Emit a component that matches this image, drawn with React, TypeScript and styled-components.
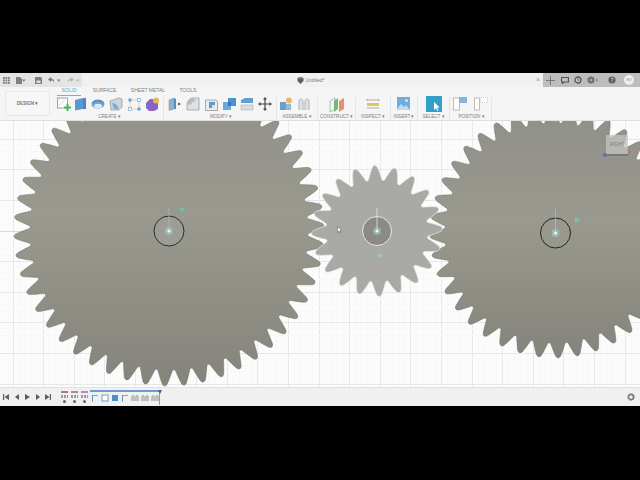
import React from 'react';
import styled, { createGlobalStyle } from 'styled-components';

const Global = createGlobalStyle`
  html, body { margin: 0; background: #000; }
  body { font-family: "Liberation Sans", Arial, sans-serif; }
`;

const Screen = styled.div`
  width: 640px;
  height: 480px;
  display: flex;
  flex-direction: column;
  background: #000;
  overflow: hidden;
`;
const Letterbox = styled.div<{ $h: number }>`
  height: ${p => p.$h}px;
  flex: none;
  background: #000;
`;

/* application bar */
const AppBar = styled.div`
  height: 14px;
  flex: none;
  display: flex;
  align-items: stretch;
  background: #f1f1f1;
`;
const QuickAccess = styled.div`
  width: 82px;
  display: flex;
  align-items: center;
  padding-left: 2px;
  box-sizing: border-box;
  background: #e2e2e2;
  opacity: 0.85;
`;
const BarSlot = styled.span<{ $w: number }>`
  width: ${p => p.$w}px;
  height: 14px;
  flex: none;
  display: flex;
  align-items: center;
  justify-content: center;
`;
const DocTab = styled.div`
  flex: 1;
  display: flex;
  align-items: center;
  justify-content: center;
  gap: 2px;
  padding-left: 6px;
  font-size: 5px;
  color: #777;
`;
const DocClose = styled.span`
  width: 10px;
  text-align: center;
  font-size: 7px;
  line-height: 14px;
  color: #999;
`;
const AccountArea = styled.div`
  width: 97px;
  display: flex;
  align-items: center;
  box-sizing: border-box;
  background: #bdbdbb;
`;
const Avatar = styled.span`
  width: 10px;
  height: 10px;
  border-radius: 50%;
  background: #efefef;
  color: #888;
  font-size: 4px;
  line-height: 10px;
  text-align: center;
`;

/* ribbon */
const Ribbon = styled.div`
  height: 34px;
  flex: none;
  display: flex;
  background: #f5f5f5;
  border-bottom: 1px solid #dedede;
  box-sizing: border-box;
`;
const WorkspaceButton = styled.div`
  width: 45px;
  height: 25px;
  margin: 4px 6px 0 5px;
  flex: none;
  box-sizing: border-box;
  border: 1px solid #e8e8e8;
  border-radius: 2px;
  background: #f7f7f7;
  display: flex;
  align-items: center;
  justify-content: center;
  font-size: 4.5px;
  font-weight: bold;
  color: #777;
`;
const RibbonBody = styled.div`
  display: flex;
  flex-direction: column;
`;
const Tabs = styled.div`
  height: 9px;
  display: flex;
  padding-left: 1px;
`;
const Tab = styled.div<{ $w: number; $on?: boolean }>`
  width: ${p => p.$w}px;
  height: 9px;
  box-sizing: border-box;
  text-align: center;
  font-size: 5px;
  line-height: 7px;
  white-space: nowrap;
  color: ${p => (p.$on ? '#58a9ca' : '#808080')};
  border-bottom: 1px solid ${p => (p.$on ? '#6fb5d0' : 'transparent')};
`;
const Groups = styled.div`
  display: flex;
  height: 24px;
`;
const Group = styled.div<{ $w: number; $pad?: number }>`
  width: ${p => p.$w}px;
  height: 23px;
  margin-top: 1px;
  flex: none;
  box-sizing: border-box;
  padding-left: ${p => p.$pad ?? 0}px;
  border-right: 1px solid #e6e6e6;
  display: flex;
  flex-direction: column;
  align-items: flex-start;
`;
const ToolRow = styled.div`
  display: flex;
  width: 100%;
  height: 15px;
  align-items: center;
  opacity: 0.9;
`;
const Tool = styled.span<{ $w?: number }>`
  width: ${p => p.$w ?? 18}px;
  height: 14px;
  flex: none;
  display: flex;
  align-items: center;
  justify-content: center;
`;
const GroupLabel = styled.div`
  align-self: stretch;
  margin-top: 3px;
  font-size: 4.6px;
  line-height: 6px;
  text-align: center;
  white-space: nowrap;
  color: #7c7c7c;
`;

/* modelling canvas */
const Viewport = styled.div`
  position: relative;
  height: 266px;
  flex: none;
  background: #fcfcfc;
  overflow: hidden;
`;
const ViewCube = styled.div`
  position: absolute;
  left: 606px;
  top: 14px;
  width: 22px;
  height: 20px;
  box-sizing: border-box;
  background: rgba(195, 195, 192, 0.75);
  border-bottom: 1px solid #77776f;
  font-size: 4.5px;
  line-height: 19px;
  text-align: center;
  color: #808080;
`;

/* timeline */
const Timeline = styled.div`
  height: 19px;
  flex: none;
  display: flex;
  align-items: center;
  background: #f0f0f0;
  border-top: 1px solid #e2e2e2;
  box-sizing: border-box;
`;
const Transport = styled.div`
  width: 58px;
  padding-left: 1px;
  box-sizing: border-box;
  display: flex;
  flex: none;
  opacity: 0.85;
`;
const TransportButton = styled.span`
  width: 10.5px;
  display: flex;
  justify-content: center;
`;
const FeatureMarks = styled.div`
  width: 31px;
  margin-left: 1px;
  flex: none;
  display: flex;
`;
const Mark = styled.div`
  width: 10px;
  display: flex;
  flex-direction: column;
  align-items: center;
  gap: 2px;
`;
const MarkBar = styled.i<{ $c: string }>`
  width: 7px;
  height: 2px;
  background: ${p => p.$c};
`;
const MarkDots = styled.i`
  width: 7px;
  height: 3px;
  background: repeating-linear-gradient(90deg, #9a9a9a 0 2px, transparent 2px 3px);
`;
const MarkPin = styled.i`
  width: 3px;
  height: 3px;
  border-radius: 50%;
  background: #666;
`;
const Track = styled.div`
  position: relative;
  width: 70px;
  height: 15px;
  flex: none;
  display: flex;
  align-items: flex-start;
  padding-top: 2px;
  box-sizing: border-box;
  border-top: 2px solid #6f9ad6;
  border-right: 1px solid #999;
`;
const TrackItem = styled.span`
  width: 10px;
  height: 8px;
  flex: none;
  display: flex;
  justify-content: center;
`;
const Playhead = styled.i`
  position: absolute;
  right: -3px;
  top: -2px;
  border-left: 2.5px solid transparent;
  border-right: 2.5px solid transparent;
  border-top: 4px solid #445f90;
`;
const TimelineEnd = styled.span`
  margin-left: auto;
  margin-right: 5px;
  display: flex;
`;

/* gear outline from tooth count and radii, in page coordinates */
function gearPath(cx: number, cy: number, teeth: number, tip: number, root: number, phaseDeg: number) {
  const pitch = (Math.PI * 2) / teeth;
  const phase = (phaseDeg * Math.PI) / 180;
  const pt = (r: number, a: number) => `${(cx + r * Math.cos(a)).toFixed(2)} ${(cy + r * Math.sin(a)).toFixed(2)}`;
  const low = root + (tip - root) * 0.3;
  const high = root + (tip - root) * 0.7;
  let d = '';
  for (let i = 0; i < teeth; i++) {
    const c = phase + i * pitch;
    const start = pt(root, c - 0.42 * pitch);
    d += i === 0 ? `M${start}` : `L${start}`;
    d += `C${pt(low, c - 0.32 * pitch)} ${pt(high, c - 0.2 * pitch)} ${pt(tip - 1.5, c - 0.12 * pitch)}`;
    d += `Q${pt(tip + 1.5, c)} ${pt(tip - 1.5, c + 0.12 * pitch)}`;
    d += `C${pt(high, c + 0.2 * pitch)} ${pt(low, c + 0.32 * pitch)} ${pt(root, c + 0.42 * pitch)}`;
    d += `Q${pt(root - 1.2, c + 0.5 * pitch)} `;
    d += pt(root, c + 0.58 * pitch);
  }
  return d + 'Z';
}

const LEFT_GEAR = gearPath(169, 231, 50, 155, 139.5, 5.2);
const MID_GEAR = gearPath(377, 231, 20, 65.5, 51.5, -2);
const RIGHT_GEAR = gearPath(555, 233, 40, 125, 110.5, -1.5);

const range = (from: number, to: number, step: number) => {
  const out: number[] = [];
  for (let v = from; v <= to; v += step) out.push(v);
  return out;
};

function GridLines() {
  const v = range(13, 640, 6.12);
  const h = range(231 - 30.6 * 4, 390, 6.12);
  return (
    <g shapeRendering="crispEdges">
      {v.map((x, i) => (
        <line key={`v${i}`} x1={x} x2={x} y1={121} y2={387} stroke={i % 5 === 0 ? '#e7e7e7' : '#f8f8f8'} />
      ))}
      {h.map((y, i) => (
        <line key={`h${i}`} y1={y} y2={y} x1={0} x2={640} stroke={i % 5 === 0 ? '#e7e7e7' : '#f8f8f8'} />
      ))}
      <line x1={0} x2={640} y1={231} y2={231} stroke="#f2d0d0" />
    </g>
  );
}

function HubPoint({ x, y }: { x: number; y: number }) {
  return (
    <>
      <circle cx={x} cy={y} r={4} fill="#9fd8d0" opacity={0.5} />
      <circle cx={x} cy={y} r={1.6} fill="#e4fbf6" />
    </>
  );
}

function GearScene() {
  return (
    <svg width={640} height={266} viewBox="0 121 640 266" style={{ display: 'block' }}>
      <defs>
        <linearGradient id="steel" x1="0" y1="0" x2="0" y2="1">
          <stop offset="0" stopColor="#90908a" />
          <stop offset="0.45" stopColor="#99998f" />
          <stop offset="1" stopColor="#85847c" />
        </linearGradient>
      </defs>
      <GridLines />
      <path d={LEFT_GEAR} fill="url(#steel)" stroke="#6e6e66" strokeWidth={0.5} />
      <path d={RIGHT_GEAR} fill="url(#steel)" stroke="#6e6e66" strokeWidth={0.5} />
      <path d={MID_GEAR} fill="#a9a9a6" stroke="#e6e6e6" strokeWidth={0.7} />

      <circle cx={169} cy={231} r={15} fill="#9d9d97" stroke="#2c2c2c" strokeWidth={1} />
      <line x1={169} x2={169} y1={231} y2={208} stroke="#b9b9b4" strokeWidth={0.7} />
      <HubPoint x={169} y={231} />
      <path d="M179 208h6l-3 5z" fill="#6fc0b2" />

      <circle cx={377} cy={231} r={14.5} fill="#8a8a86" stroke="#e8e8e8" strokeWidth={1} />
      <line x1={377} x2={377} y1={231} y2={208} stroke="#e5e5e5" strokeWidth={0.8} />
      <HubPoint x={377} y={231} />
      <path d="M378 253l5 2.500-5 2.500z" fill="#93cbc3" />

      <circle cx={555.5} cy={233} r={15} fill="#98988f" stroke="#242424" strokeWidth={1} />
      <line x1={555.5} x2={555.5} y1={233} y2={209} stroke="#bdbdb7" strokeWidth={0.7} />
      <HubPoint x={555.5} y={233} />
      <path d="M575 217l6 3-6 3z" fill="#75c2b5" />

      {/* pointer */}
      <path d="M337.500 226.500v6l1.500-1.400 1 2 .8-.4-1-2 2-.2z" fill="#fff" stroke="#333" strokeWidth={0.4} />

      {/* view cube axes */}
      <line x1={606} y1={155} x2={628} y2={155} stroke="#66665f" />
      <circle cx={605} cy={155} r={2} fill="#6a6aa8" />
      <circle cx={628} cy={152} r={2.600} fill="#a87a80" />
    </svg>
  );
}

/* application bar glyphs */
const AppsIcon = () => (
  <svg width="7" height="7" viewBox="0 0 7 7" fill="#666">
    {[0, 2.5, 5].flatMap(x => [0, 2.5, 5].map(y => <rect key={`${x}-${y}`} x={x} y={y} width="1.8" height="1.8" />))}
  </svg>
);
const FileIcon = () => (
  <svg width="6" height="7" viewBox="0 0 6 7"><path d="M0 0h4l2 2v5H0z" fill="#6d6d6d" /></svg>
);
const SaveIcon = () => (
  <svg width="7" height="7" viewBox="0 0 7 7"><path d="M0 0h6l1 1v6H0z" fill="#6d6d6d" /><rect x="1.5" y="3.5" width="4" height="2.5" fill="#ddd" /></svg>
);
const UndoIcon = ({ flip, c }: { flip?: boolean; c: string }) => (
  <svg width="7" height="6" viewBox="0 0 7 6" style={flip ? { transform: 'scaleX(-1)' } : undefined}>
    <path d="M3 0L0 2.500 3 5V3.400c1.500 0 2.500.6 3 2 .4-2.400-1-3.800-3-3.900z" fill={c} />
  </svg>
);
const Caret = ({ c = '#666' }: { c?: string }) => (
  <svg width="4" height="3" viewBox="0 0 4 3"><path d="M0 .5h3.600L1.800 2.800z" fill={c} /></svg>
);
const CubeMark = () => (
  <svg width="7" height="7" viewBox="0 0 7 7"><path d="M.5 1L3.500 0l3 1v3L3.500 7 .5 4z" fill="#5d5d5d" /><path d="M.5 1l3 1 3-1-3-1z" fill="#8c8c8c" /></svg>
);
const PlusIcon = () => (
  <svg width="9" height="9" viewBox="0 0 9 9"><path d="M4.500 0v9M0 4.500h9" stroke="#777" strokeWidth="1" /></svg>
);
const ScreenIcon = () => (
  <svg width="8" height="7" viewBox="0 0 8 7"><path d="M.5.5h7v4.500H3L1.500 6.500V5H.5z" fill="none" stroke="#555" strokeWidth="1.200" /></svg>
);
const ClockIcon = () => (
  <svg width="8" height="8" viewBox="0 0 8 8"><circle cx="4" cy="4" r="3" fill="none" stroke="#555" strokeWidth="1.300" /><path d="M4 2.500V4l1 .8" stroke="#555" strokeWidth=".7" fill="none" /></svg>
);
const JobIcon = () => (
  <svg width="12" height="8" viewBox="0 0 12 8"><circle cx="4" cy="4" r="3.500" fill="#6e6e6e" /><circle cx="4" cy="4" r="1.300" fill="#aaa" /><rect x="9.500" y="2.500" width="1" height="3" fill="#777" /></svg>
);
const HelpIcon = () => (
  <svg width="8" height="8" viewBox="0 0 8 8"><circle cx="4" cy="4" r="3.600" fill="#5e5e5e" /><path d="M2.800 3c.2-1.300 2.400-1.200 2.400 0 0 .8-1.200.8-1.200 1.700M4 5.500v.8" stroke="#ddd" strokeWidth=".7" fill="none" /></svg>
);

/* ribbon tool icons */
const Draw = ({ w = 14, h = 14, children }: { w?: number; h?: number; children: React.ReactNode }) => (
  <svg width={w} height={h} viewBox={`0 0 ${w} ${h}`}>{children}</svg>
);
const SketchTool = () => (
  <Draw w={14} h={14}>
    <rect x=".5" y="1" width="10" height="10" fill="#fbfbfb" stroke="#777" strokeWidth=".7" />
    <path d="M2 8l6-5" stroke="#999" strokeWidth=".6" strokeDasharray="1 1" />
    <path d="M10.500 7v7M7 10.500h7" stroke="#3fae4a" strokeWidth="2" />
  </Draw>
);
const ExtrudeTool = () => (
  <Draw w={13} h={14}>
    <path d="M1 3l8-2v11l-8 1.500z" fill="#4a90cc" />
    <path d="M9 1l3 1v10H9z" fill="#3a7ab4" />
    <path d="M9.500 2.500l2.500-1.500" stroke="#555" strokeWidth=".8" />
  </Draw>
);
const RevolveTool = () => (
  <Draw>
    <ellipse cx="7" cy="7" rx="6.500" ry="4.500" fill="#5a9bd2" />
    <ellipse cx="7" cy="9" rx="4" ry="2.200" fill="#dfe9f2" />
    <path d="M1 6c2-3 10-3 12 0" fill="none" stroke="#3f7cb4" strokeWidth="1" />
  </Draw>
);
const SweepTool = () => (
  <Draw>
    <path d="M1 4l9-3 3 1v8l-3 3H2z" fill="#c9d0d6" stroke="#8b8b8b" strokeWidth=".7" />
    <path d="M3 6c4 0 6 3 7 6H5z" fill="#6fa6d0" />
  </Draw>
);
const PatternTool = () => (
  <Draw w={13} h={13}>
    <path d="M2 2h9M2 2v9M11 2v9M2 11h9" stroke="#8d9aa6" strokeWidth=".6" strokeDasharray="1.500 1" />
    <rect x=".5" y=".5" width="3" height="3" fill="#5a97c8" />
    <rect x="9.500" y=".5" width="3" height="3" fill="#fff" stroke="#5a97c8" strokeWidth=".6" />
    <rect x=".5" y="9.500" width="3" height="3" fill="#fff" stroke="#5a97c8" strokeWidth=".6" />
    <rect x="9.500" y="9.500" width="3" height="3" fill="#5a97c8" />
  </Draw>
);
const FormTool = () => (
  <Draw>
    <path d="M1 6l4-4 6 0 2 4v6l-4 2H4L1 11z" fill="#7d54c4" />
    <circle cx="11" cy="3.500" r="3" fill="#e8b24a" />
  </Draw>
);
const PressPullTool = () => (
  <Draw>
    <path d="M1 3l5-2v11l-5 1.500z" fill="#8fa9bf" stroke="#6a8aa6" strokeWidth=".5" />
    <path d="M6 1l2 1v10H6z" fill="#3b86c6" />
    <path d="M10 5.500l3 1.500-3 1.500z" fill="#444" />
  </Draw>
);
const FilletTool = () => (
  <Draw>
    <path d="M1 13V7c0-3 3-6 6-6h6v12z" fill="#d9dfe4" stroke="#8b8b8b" strokeWidth=".7" />
    <path d="M1 7c0-3 3-6 6-6l3 3c-3 0-5 2-5 4z" fill="#aeb9c2" />
  </Draw>
);
const ChamferTool = () => (
  <Draw w={13} h={13}>
    <path d="M.5 2h10l2 1v9.500H.5z" fill="#e8ecef" stroke="#7f7f7f" strokeWidth=".7" />
    <path d="M4 4h6v6H4z" fill="#4f90c8" />
    <path d="M7 7h3v3H7z" fill="#d4dde4" />
  </Draw>
);
const CombineTool = () => (
  <Draw>
    <rect x="6" y="1" width="8" height="8" fill="#3a88cc" />
    <rect x="1" y="5" width="8" height="8" fill="#5aa0dc" />
    <path d="M6 5h3v4H6z" fill="#2a6ca6" />
  </Draw>
);
const OffsetPlaneTool = () => (
  <Draw>
    <path d="M1 3l4-2h8v5H1z" fill="#4f96d0" />
    <path d="M1 8h12v5H1z" fill="#d5dadd" stroke="#9a9a9a" strokeWidth=".5" />
  </Draw>
);
const MoveTool = () => (
  <Draw>
    <path d="M7 0l2 2.500H7.600v3.900h3.900V5L14 7l-2.500 2V7.600H7.600v3.900H9L7 14l-2-2.500h1.400V7.600H2.500V9L0 7l2.500-2v1.400h3.900V2.500H5z" fill="#333" />
  </Draw>
);
const JointTool = () => (
  <Draw>
    <rect x="1" y="5" width="6" height="8" fill="#5a97cc" />
    <rect x="7" y="7" width="5" height="6" fill="#8fb4d4" />
    <circle cx="10" cy="3.500" r="3" fill="#e4b75a" />
  </Draw>
);
const MotionTool = () => (
  <Draw>
    <path d="M2 13V5c0-4 4-4 4 0v8M8 13V5c0-4 4-4 4 0v8" fill="#dde2e6" stroke="#a4acb4" strokeWidth="1" />
  </Draw>
);
const PlaneTool = () => (
  <Draw w={16} h={15}>
    <path d="M1 4l5-3v11l-5 3z" fill="#f3f3f3" stroke="#7ea67e" strokeWidth=".7" />
    <path d="M5 4l4-3v11l-4 3z" fill="#6ab06e" />
    <path d="M10 4l5-3v11l-5 3z" fill="#dd8a60" />
  </Draw>
);
const MeasureTool = () => (
  <Draw>
    <path d="M1 3h12M1 2v2M13 2v2" stroke="#777" strokeWidth=".6" />
    <rect x="1" y="6" width="12" height="3" fill="#e8bd55" />
    <path d="M1 11h12" stroke="#888" strokeWidth=".7" />
  </Draw>
);
const ImageTool = () => (
  <Draw>
    <rect width="13" height="13" fill="#62a6da" />
    <path d="M0 12l4-5 3 3 2-2 4 5H0z" fill="#b9d9ef" />
    <circle cx="9.500" cy="3.500" r="1.500" fill="#cfe6f5" />
  </Draw>
);
const SelectTool = () => (
  <Draw w={16} h={16}>
    <rect width="16" height="16" fill="#1c96c6" />
    <path d="M8 6v8l2-1.800 1.400 2.800 1-.5-1.300-2.700 2.500-.2z" fill="#fff" />
  </Draw>
);
const PositionTool = () => (
  <Draw w={18} h={14}>
    <rect x=".5" y="1" width="6" height="12" fill="#fff" stroke="#999" strokeWidth=".7" />
    <rect x="6" y="0" width="8" height="6" fill="#7aaedc" />
  </Draw>
);
const RevertTool = () => (
  <Draw w={14} h={14}>
    <rect x=".5" y="1" width="5" height="12" fill="#fff" stroke="#999" strokeWidth=".7" />
    <rect x="7" y=".5" width="6.500" height="5" fill="#fff" stroke="#aaa" strokeWidth=".6" strokeDasharray="1 1" />
  </Draw>
);

/* timeline glyphs */
const Transports = [
  'M0 0h1.200v6H0zM6 0v6L1.500 3z',
  'M5 0v6L1 3z',
  'M1 0v6l5-3z',
  'M1 0v6l4-3z',
  'M0 0v6l4.500-3zM4.800 0H6v6H4.800z',
];
const FeatureGlyph = ({ kind }: { kind: string }) => (
  <svg width="8" height="8" viewBox="0 0 8 8">
    {kind === 'sketch' && <path d="M1 1h6v.8H2v6H1z" fill="#5a94c8" />}
    {kind === 'box' && <rect x="1" y="1" width="6" height="6" fill="#fff" stroke="#6a9ccc" />}
    {kind === 'solid' && <rect x="1" y="1" width="6" height="6" fill="#4b8ec8" />}
    {kind === 'joint' && <path d="M1 7V3c0-2 2-2 2 0v4M5 7V3c0-2 2-2 2 0v4" fill="none" stroke="#777" strokeWidth=".8" />}
  </svg>
);
const SettingsIcon = () => (
  <svg width="8" height="8" viewBox="0 0 8 8">
    <circle cx="4" cy="4" r="2.500" fill="none" stroke="#777" strokeWidth="1.400" />
    <circle cx="4" cy="4" r="3.500" fill="none" stroke="#777" strokeWidth="1" strokeDasharray="1 1.200" />
  </svg>
);

const TRACK = ['sketch', 'box', 'solid', 'sketch', 'joint', 'joint', 'joint'];
const MARKS = ['#c9688e', '#b57fb4', '#b88bb8'];

export default function App() {
  return (
    <Screen>
      <Global />
      <Letterbox $h={73} />
      <AppBar>
        <QuickAccess>
          <BarSlot $w={8}><AppsIcon /></BarSlot>
          <BarSlot $w={5} />
          <BarSlot $w={7}><FileIcon /></BarSlot>
          <BarSlot $w={4}><Caret /></BarSlot>
          <BarSlot $w={8} />
          <BarSlot $w={9}><SaveIcon /></BarSlot>
          <BarSlot $w={4} />
          <BarSlot $w={9}><UndoIcon c="#666" /></BarSlot>
          <BarSlot $w={5}><Caret /></BarSlot>
          <BarSlot $w={5} />
          <BarSlot $w={9}><UndoIcon flip c="#aaa" /></BarSlot>
          <BarSlot $w={5}><Caret c="#aaa" /></BarSlot>
        </QuickAccess>
        <DocTab>
          <CubeMark />
          <span>Untitled*</span>
        </DocTab>
        <DocClose>×</DocClose>
        <AccountArea>
          <BarSlot $w={14}><PlusIcon /></BarSlot>
          <BarSlot $w={15}><ScreenIcon /></BarSlot>
          <BarSlot $w={12}><ClockIcon /></BarSlot>
          <BarSlot $w={17}><JobIcon /></BarSlot>
          <BarSlot $w={21}><HelpIcon /></BarSlot>
          <BarSlot $w={14}><Avatar>SV</Avatar></BarSlot>
        </AccountArea>
      </AppBar>
      <Ribbon>
        <WorkspaceButton>DESIGN&nbsp;▾</WorkspaceButton>
        <RibbonBody>
          <Tabs>
            <Tab $w={24} $on>SOLID</Tab>
            <Tab $w={47}>SURFACE</Tab>
            <Tab $w={40}>SHEET METAL</Tab>
            <Tab $w={40}>TOOLS</Tab>
          </Tabs>
          <Groups>
            <Group $w={108}>
              <ToolRow>
                <Tool $w={15}><SketchTool /></Tool>
                <Tool><ExtrudeTool /></Tool>
                <Tool><RevolveTool /></Tool>
                <Tool><SweepTool /></Tool>
                <Tool><PatternTool /></Tool>
                <Tool><FormTool /></Tool>
              </ToolRow>
              <GroupLabel>CREATE ▾</GroupLabel>
            </Group>
            <Group $w={113} $pad={2}>
              <ToolRow>
                <Tool><PressPullTool /></Tool>
                <Tool><FilletTool /></Tool>
                <Tool><ChamferTool /></Tool>
                <Tool><CombineTool /></Tool>
                <Tool><OffsetPlaneTool /></Tool>
                <Tool><MoveTool /></Tool>
              </ToolRow>
              <GroupLabel>MODIFY ▾</GroupLabel>
            </Group>
            <Group $w={41}>
              <ToolRow>
                <Tool><JointTool /></Tool>
                <Tool><MotionTool /></Tool>
              </ToolRow>
              <GroupLabel>ASSEMBLE ▾</GroupLabel>
            </Group>
            <Group $w={38}>
              <ToolRow><Tool $w={37}><PlaneTool /></Tool></ToolRow>
              <GroupLabel>CONSTRUCT ▾</GroupLabel>
            </Group>
            <Group $w={35}>
              <ToolRow><Tool $w={34}><MeasureTool /></Tool></ToolRow>
              <GroupLabel>INSPECT ▾</GroupLabel>
            </Group>
            <Group $w={27}>
              <ToolRow><Tool $w={26}><ImageTool /></Tool></ToolRow>
              <GroupLabel>INSERT ▾</GroupLabel>
            </Group>
            <Group $w={32}>
              <ToolRow><Tool $w={31}><SelectTool /></Tool></ToolRow>
              <GroupLabel>SELECT ▾</GroupLabel>
            </Group>
            <Group $w={42} $pad={2}>
              <ToolRow>
                <Tool $w={19}><PositionTool /></Tool>
                <Tool $w={20}><RevertTool /></Tool>
              </ToolRow>
              <GroupLabel>POSITION ▾</GroupLabel>
            </Group>
          </Groups>
        </RibbonBody>
      </Ribbon>
      <Viewport>
        <GearScene />
        <ViewCube>RIGHT</ViewCube>
      </Viewport>
      <Timeline>
        <Transport>
          {Transports.map(d => (
            <TransportButton key={d}>
              <svg width="6" height="6" viewBox="0 0 6 6"><path d={d} fill="#444" /></svg>
            </TransportButton>
          ))}
        </Transport>
        <FeatureMarks>
          {MARKS.map(c => (
            <Mark key={c}>
              <MarkBar $c={c} />
              <MarkDots />
              <MarkPin />
            </Mark>
          ))}
        </FeatureMarks>
        <Track>
          {TRACK.map((k, i) => (
            <TrackItem key={i}><FeatureGlyph kind={k} /></TrackItem>
          ))}
          <Playhead />
        </Track>
        <TimelineEnd><SettingsIcon /></TimelineEnd>
      </Timeline>
      <Letterbox $h={74} />
    </Screen>
  );
}
